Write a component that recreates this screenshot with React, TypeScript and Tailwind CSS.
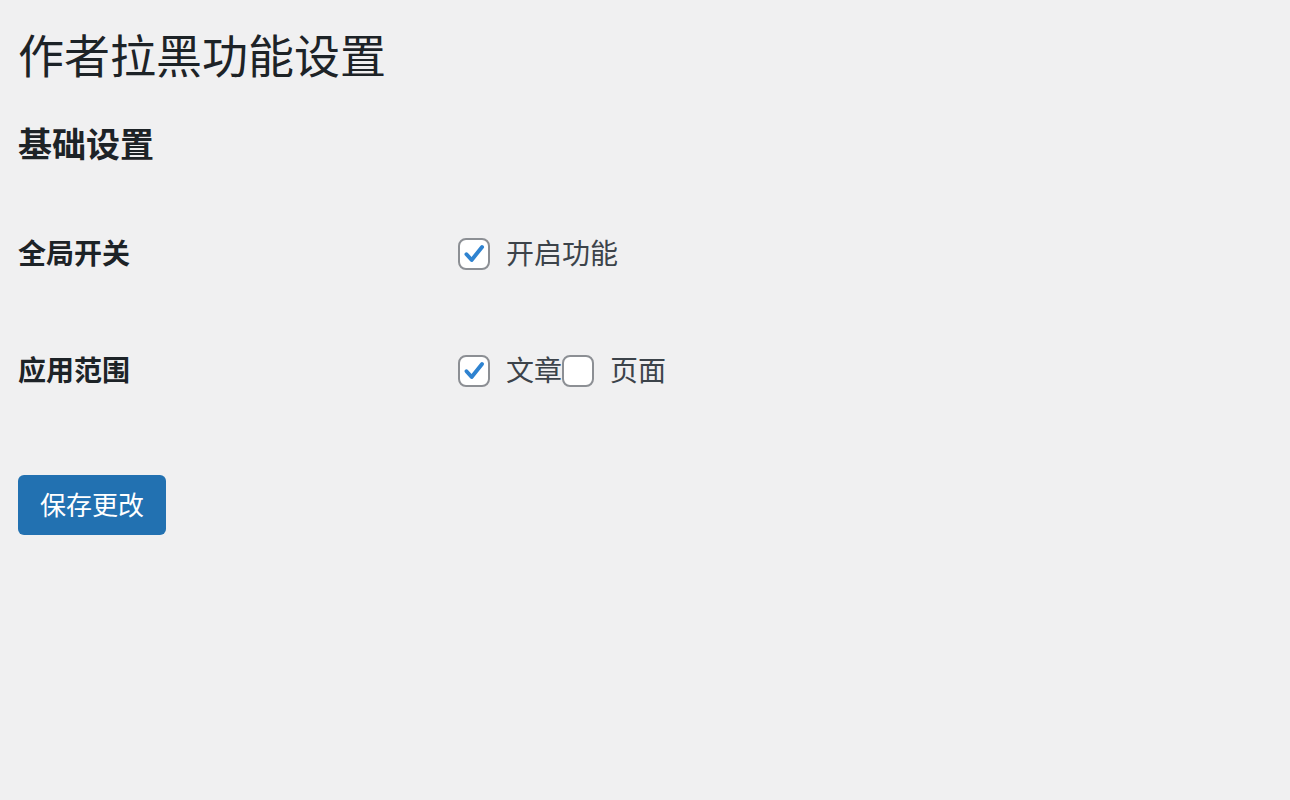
import { useState } from "react";

const FONT = { fontFamily: '"Noto Sans CJK SC", "Noto Sans", sans-serif' };

function Checkbox(props: { checked: boolean; onChange: () => void }) {
  return (
    <button
      type="button"
      onClick={props.onChange}
      className="flex h-[32px] w-[32px] shrink-0 items-center justify-center rounded-[8px] border-2 border-[#8c8f94] bg-white"
    >
      {props.checked && (
        <svg viewBox="0 0 20 20" className="h-[26px] w-[26px]">
          <path
            d="M4.2 10.2 L8.2 14.6 L16.2 4.6"
            fill="none"
            stroke="#2f83d0"
            strokeWidth="3"
            strokeLinecap="round"
            strokeLinejoin="round"
          />
        </svg>
      )}
    </button>
  );
}

export default function App() {
  const [enabled, setEnabled] = useState(true);
  const [post, setPost] = useState(true);
  const [page, setPage] = useState(false);

  return (
    <div className="min-h-[800px] bg-[#f0f0f1] pl-[18px] text-[#1d2327]" style={FONT}>
      <h1 className="pt-[25px] text-[46px] leading-[56px] font-normal">作者拉黑功能设置</h1>
      <h2 className="mt-[42px] text-[34px] leading-[40px] font-bold">基础设置</h2>

      <div className="mt-[71px] flex h-[40px] items-center">
        <div className="w-[440px] pb-[4px] text-[28px] font-bold">全局开关</div>
        <label className="flex items-center text-[28px] text-[#3c434a]">
          <Checkbox checked={enabled} onChange={() => setEnabled(!enabled)} />
          <span className="ml-[16px] pb-[4px]">开启功能</span>
        </label>
      </div>

      <div className="mt-[77px] flex h-[40px] items-center">
        <div className="w-[440px] pb-[4px] text-[28px] font-bold">应用范围</div>
        <label className="flex items-center text-[28px] text-[#3c434a]">
          <Checkbox checked={post} onChange={() => setPost(!post)} />
          <span className="ml-[16px] pb-[4px]">文章</span>
        </label>
        <label className="flex items-center text-[28px] text-[#3c434a]">
          <Checkbox checked={page} onChange={() => setPage(!page)} />
          <span className="ml-[16px] pb-[4px]">页面</span>
        </label>
      </div>

      <button className="mt-[84px] h-[60px] w-[148px] rounded-[6px] bg-[#2271b1] pb-[4px] text-[26px] text-white">
        保存更改
      </button>
    </div>
  );
}
